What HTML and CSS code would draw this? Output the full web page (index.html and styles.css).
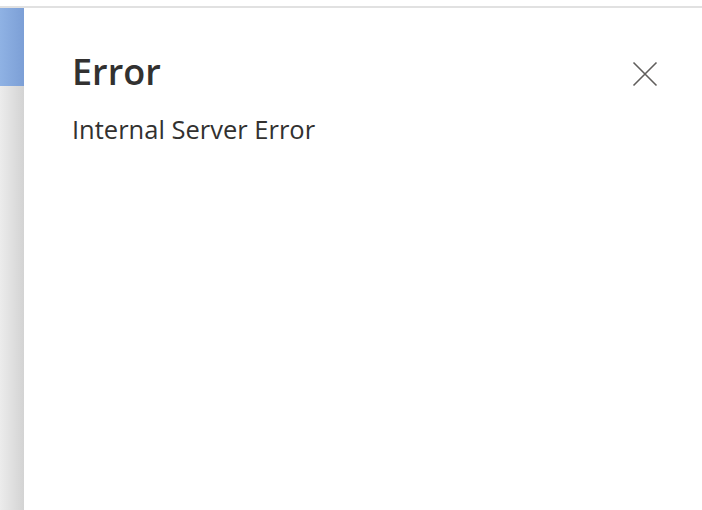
FILE: index.html
```html
<!DOCTYPE html>
<html>
<head>
<meta charset="utf-8">
<link rel="stylesheet" href="styles.css">
</head>
<body>
<div class="topbar"></div>
<div class="main">
  <div class="side">
    <div class="side-blue"></div>
    <div class="side-gray"></div>
  </div>
  <div class="panel">
    <div class="head">
      <h1 class="title">Error</h1>
      <button class="close" aria-label="Close">
        <svg width="26" height="26" viewBox="0 0 26 26"><path d="M1.5 1.5 L24.5 24.5 M24.5 1.5 L1.5 24.5" stroke="#605e5c" stroke-width="1.6" fill="none"/></svg>
      </button>
    </div>
    <p class="msg">Internal Server Error</p>
  </div>
</div>
</body>
</html>
```
FILE: styles.css
```css
html, body {
  margin: 0;
  padding: 0;
  background: #fff;
  height: 100%;
}
body {
  display: flex;
  flex-direction: column;
  font-family: "Open Sans", "Noto Sans", sans-serif;
  color: #323130;
}
.topbar {
  height: 6px;
  border-bottom: 2px solid #e1e1e1;
  flex: none;
}
.main {
  flex: 1;
  display: flex;
}
.side {
  width: 24px;
  display: flex;
  flex-direction: column;
}
.side-blue {
  height: 78px;
  background: linear-gradient(to right, #8fb2e4, #7c9fd6);
}
.side-gray {
  flex: 1;
  background: linear-gradient(to right, #ececec, #d3d3d3);
}
.panel {
  flex: 1;
  background: #fff;
  padding: 43px 44px 0 48px;
}
.head {
  display: flex;
  justify-content: space-between;
  align-items: flex-start;
}
.title {
  margin: 0;
  font-size: 36px;
  font-weight: 600;
  line-height: 42px;
  color: #323130;
}
.close {
  border: 0;
  background: none;
  padding: 0;
  margin-top: 10px;
  width: 26px;
  height: 26px;
  display: flex;
}
.msg {
  margin: 19px 0 0;
  font-size: 25.5px;
  line-height: 34px;
  color: #323130;
}
```
